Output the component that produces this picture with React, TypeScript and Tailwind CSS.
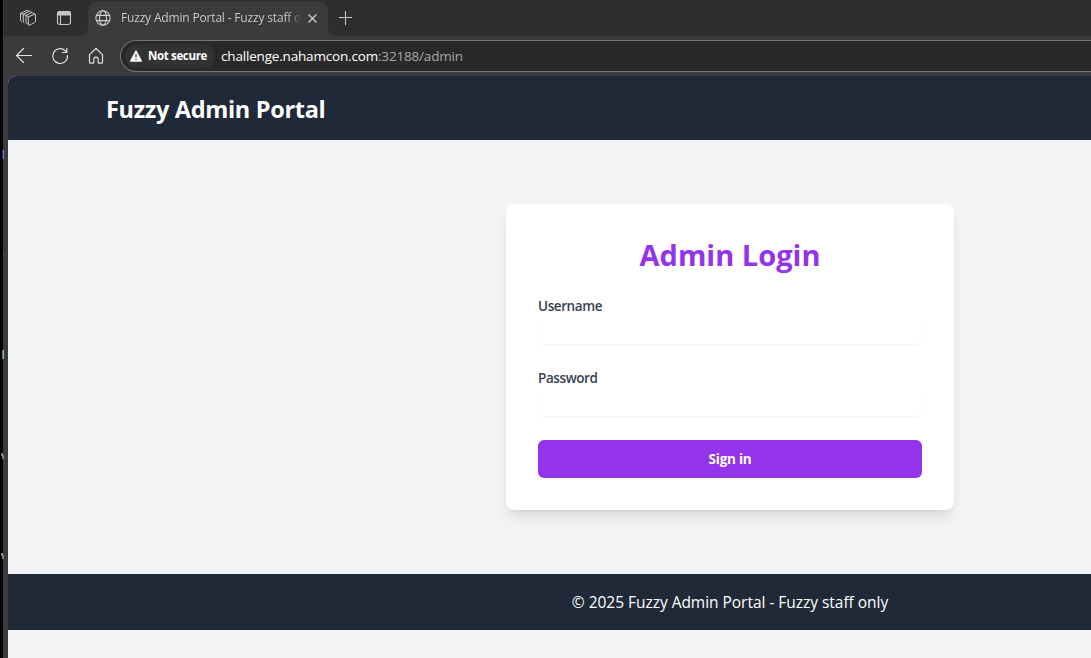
import React from "react";

function Fragments() {
  return (
    <svg className="h-full w-[4px] shrink-0" viewBox="0 0 4 658" preserveAspectRatio="none" shapeRendering="crispEdges">
      <rect width="3" height="658" fill="#000" />
      <rect x="2" y="150" width="1" height="9" fill="#1717a8" />
      <rect x="3" y="150" width="1" height="9" fill="#8492a8" />
      <rect x="3" y="253" width="1" height="3" fill="#345a80" />
      <rect x="2" y="350" width="1" height="9" fill="#55809a" />
      <rect x="3" y="350" width="1" height="9" fill="#9ca88e" />
      <path d="M1 453h1v2h1v4h-1v-3h-1z" fill="#4b87a8" />
      <path d="M2 453h1v2h1v4h-1v-3h-1z" fill="#a8846a" />
      <path d="M1 553h1v2h1v4h-1v-3h-1z" fill="#4b87a8" />
      <path d="M2 553h1v2h1v4h-1v-3h-1z" fill="#a8846a" />
    </svg>
  );
}

function TabStrip() {
  return (
    <div className="flex h-9 bg-[#3b3b3b] text-[#d0d0d0]">
      <div className="flex w-[84px] items-center rounded-br-lg bg-[#2e2e2e] pl-[15px]">
        <svg className="size-[18px]" viewBox="0 0 18 18" fill="none" stroke="#c8c8c8" strokeWidth="1" strokeLinejoin="round" strokeLinecap="round">
          <path d="M9.500 7.800 15.500 5.300Q16.500 5 16.500 6V12.300Q16.500 13 15.800 13.400L10.300 16.300Q9.500 16.600 9.500 15.800zM9.500 7.800 7 6.300V13.700L9.500 15.700M7 6.300 13 3.500 16 5.300" />
          <path d="M5 13.700 4.300 13.200V5L10.500 2.200 12.500 3.300M4.300 5 6.500 6.200" />
          <path d="M2.500 12.300 1.500 11.600V4.300L8 1.300 9.800 2.200M1.500 4.300 4 5.500" />
        </svg>
        <svg className="ml-[19px] size-4" viewBox="0 0 16 16" fill="none" stroke="#c8c8c8" strokeWidth="1.100">
          <rect x="1.500" y="1.500" width="13" height="13" rx="2.400" />
          <path d="M1.500 5V3.500a2 2 0 0 1 2-2h9a2 2 0 0 1 2 2V5z" fill="#c8c8c8" />
          <path d="M4.500 5v9.500" />
        </svg>
      </div>
      <div className="flex w-[240px] bg-[#2e2e2e] pt-[2px]">
        <div className="flex w-full items-center rounded-t-lg bg-[#3b3b3b] pl-[7px]">
          <svg className="mb-[2px] size-[16px] shrink-0" viewBox="0 0 17 17" fill="none" stroke="#d0d0d0" strokeWidth="1.100">
            <circle cx="8.500" cy="8.500" r="7.600" />
            <ellipse cx="8.500" cy="8.500" rx="3.700" ry="7.600" />
            <path d="M1.600 5.700h13.800M1.600 11.300h13.800" />
          </svg>
          <span className="mb-[2px] ml-[10px] w-[181px] overflow-hidden bg-gradient-to-r from-[#d0d0d0] from-92% to-[#3b3b3b] bg-clip-text font-['Open_Sans',sans-serif] text-[12px] tracking-[-0.170px] whitespace-nowrap text-transparent">
            Fuzzy Admin Portal - Fuzzy staff o
          </span>
          <svg className="mb-px ml-[6px] size-[9px]" viewBox="0 0 9 9" stroke="#d0d0d0" strokeWidth="1.200">
            <path d="M.5.5l8 8M8.500.5l-8 8" />
          </svg>
        </div>
      </div>
      <div className="flex flex-1 rounded-bl-lg bg-[#2e2e2e]">
        <svg className="mt-[11px] ml-[11px] size-[14px]" viewBox="0 0 14 14" stroke="#d0d0d0" strokeWidth="1">
          <path d="M6.500 0v14M0 6.500h13" />
        </svg>
      </div>
    </div>
  );
}

function Toolbar() {
  return (
    <div className="flex h-10 items-center bg-[#3b3b3b]">
      <svg className="ml-[11px] size-[18px]" viewBox="0 0 18 18" fill="none" stroke="#e2e2e2" strokeWidth="1.150" strokeLinecap="round" strokeLinejoin="round">
        <path d="M16.500 8.500H1.500M8.500 1.500l-7 7 7 7" />
      </svg>
      <svg className="ml-[18px] size-[18px]" viewBox="0 0 18 18" fill="none" stroke="#e2e2e2" strokeWidth="1.150" strokeLinecap="round" strokeLinejoin="round">
        <path d="M16.500 8.500A7.400 7.400 0 1 1 14.200 3.700L15.500 5M15.800 1.200v4.300h-4.300" />
      </svg>
      <svg className="ml-[18px] size-[18px]" viewBox="0 0 18 18" fill="none" stroke="#e2e2e2" strokeWidth="1.200" strokeLinejoin="round">
        <path d="M2.500 7.600 9 1.500l6.500 6.100v7.700a.9.900 0 0 1-.9.900h-2.500a.9.900 0 0 1-.9-.9v-3a2.200 2.200 0 0 0-4.400 0v3a.9.900 0 0 1-.9.900H3.400a.9.900 0 0 1-.9-.9z" />
      </svg>
      <div className="ml-[15px] flex h-8 flex-1 items-center rounded-l-full border border-r-0 border-[#767676] bg-[#292929] pl-1 font-['Open_Sans',sans-serif]">
        <div className="flex h-6 w-[90px] items-center rounded-full bg-[#333] pl-[5px]">
          <svg className="mb-px size-3 shrink-0" viewBox="0 0 12 12">
            <path d="M6 1 11.300 11H.7z" fill="#fff" stroke="#fff" strokeWidth="1.300" strokeLinejoin="round" />
            <path d="M6 4v3.600M6 8.700v1.300" stroke="#333" strokeWidth="1.200" />
          </svg>
          <span className="ml-[6px] text-[11.500px] font-bold tracking-[-0.350px] whitespace-nowrap text-white">Not secure</span>
        </div>
        <span className="mt-px ml-[6px] text-[13.500px] tracking-[-0.180px] whitespace-nowrap text-white">
          challenge.nahamcon.com<span className="text-[#a6a6a6]">:32188/admin</span>
        </span>
      </div>
    </div>
  );
}

function Field({ id, label, type }: { id: string; label: string; type: string }) {
  return (
    <div>
      <label htmlFor={id} className="block text-[13.500px] leading-5 font-semibold tracking-[-0.400px] text-gray-700">
        {label}
      </label>
      <input id={id} type={type} className="mt-1 block h-6 w-full rounded-md bg-white shadow-[0_1px_2px_0_rgb(0_0_0/0.05)] outline-none" />
    </div>
  );
}

export default function App() {
  return (
    <div className="flex h-[658px] w-full overflow-hidden bg-[#3b3b3b]">
      <Fragments />
      <div className="flex min-w-0 flex-1 flex-col">
        <TabStrip />
        <Toolbar />
        <div className="ml-[4px] flex flex-1 flex-col overflow-hidden rounded-tl-lg bg-[#f3f4f6] font-['Open_Sans',sans-serif]">
          <header className="flex h-16 w-[1444px] items-center bg-[#1f2937] pl-[98px]">
            <h1 className="mt-[2px] text-[23.500px] leading-8 font-bold tracking-[-0.320px] text-white">Fuzzy Admin Portal</h1>
          </header>
          <main className="flex w-[1444px] justify-center py-16">
            <section className="w-[448px] rounded-lg bg-white p-8 shadow-[0_10px_15px_-3px_rgb(0_0_0/0.1),0_4px_6px_-4px_rgb(0_0_0/0.1)]">
              <h2 className="mb-[23px] pt-px text-center text-[29px] leading-9 font-bold text-[#9333ea]">
                Admin Login
              </h2>
              <form className="flex flex-col gap-6" onSubmit={(e) => e.preventDefault()}>
                <Field id="username" label="Username" type="text" />
                <Field id="password" label="Password" type="password" />
                <button className="h-[38px] w-full rounded-md bg-[#9333ea] text-[13.500px] font-bold tracking-[-0.250px] text-white">Sign in</button>
              </form>
            </section>
          </main>
          <footer className="flex h-14 w-[1444px] items-center justify-center bg-[#1f2937] pt-[2px] text-[15.500px] tracking-[-0.030px] text-white">
            © 2025 Fuzzy Admin Portal - Fuzzy staff only
          </footer>
        </div>
      </div>
    </div>
  );
}
